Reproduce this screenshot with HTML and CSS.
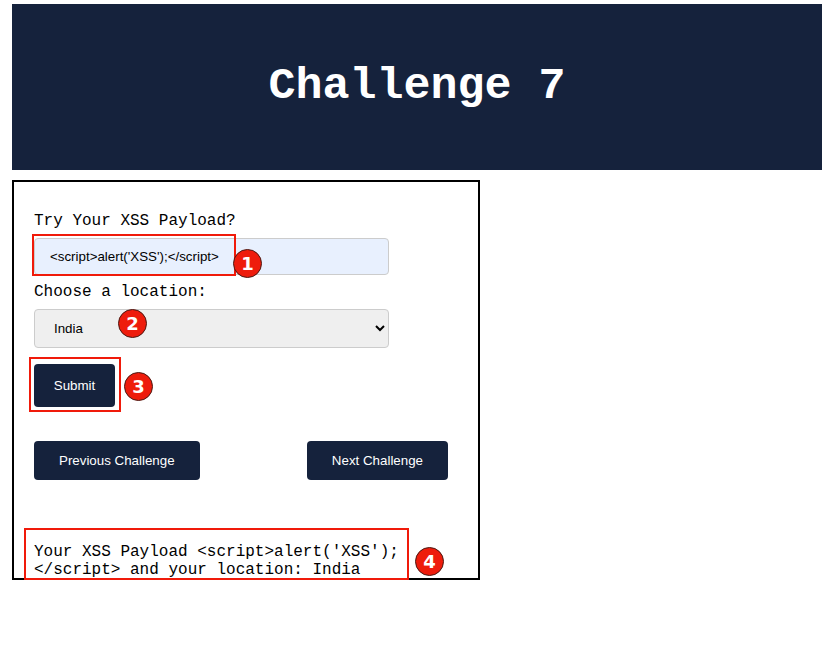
FILE: index.html
```html
<!DOCTYPE html>
<html>
<head>
<meta charset="utf-8">
<link rel="stylesheet" href="styles.css">
</head>
<body>
<div class="page">
  <header class="hero"><h1 class="title">Challenge 7</h1></header>
  <div class="card">
    <label class="label">Try Your XSS Payload?</label>
    <input class="field" type="text" value="<script>alert('XSS');</script>">
    <label class="label label-loc">Choose a location:</label>
    <select class="field select"><option>India</option></select>
    <button class="btn btn-submit">Submit</button>
    <div class="nav">
      <button class="btn btn-nav">Previous Challenge</button>
      <button class="btn btn-nav">Next Challenge</button>
    </div>
    <p class="output">Your XSS Payload &lt;script&gt;alert('XSS');<br>&lt;/script&gt; and your location: India</p>
  </div>
  <div class="mark box1"></div>
  <div class="mark box3"></div>
  <div class="mark box4"></div>
  <div class="badge b1">1</div>
  <div class="badge b2">2</div>
  <div class="badge b3">3</div>
  <div class="badge b4">4</div>
</div>
</body>
</html>
```
FILE: styles.css
```css
html, body { margin: 0; padding: 0; background: #fff; }
.page { position: relative; width: 829px; height: 645px; padding: 4px 0 0 12px; box-sizing: border-box; font-family: "Liberation Mono", monospace; }
.hero { width: 810px; height: 166px; background: #15223c; display: flex; align-items: center; justify-content: center; }
.title { margin: 0 0 2px; color: #fff; font-family: "Liberation Mono", monospace; font-weight: bold; font-size: 45px; line-height: 1; }
.card { margin-top: 10px; width: 468px; height: 400px; box-sizing: border-box; border: 2px solid #000; padding: 30px 20px 0; overflow: hidden; }
.label { display: block; font-size: 16px; line-height: 18px; color: #000; }
.field { display: block; box-sizing: border-box; width: 355px; height: 37px; margin-top: 8px; padding: 0 15px; border: 1px solid #ccc; border-radius: 4px; background: #e8f0fe; font-family: "Liberation Sans", Arial, sans-serif; font-size: 13.33px; color: #000; }
.label-loc { margin-top: 8px; }
.select { height: 39px; margin-top: 8px; background: #efefef; padding: 0 15px; }
.btn { background: #15223c; color: #fff; border: none; border-radius: 4px; font-family: "Liberation Sans", Arial, sans-serif; font-size: 13.33px; }
.btn-submit { display: block; margin-top: 16px; width: 81px; height: 43px; padding: 0; }
.nav { margin-top: 34px; width: 414px; display: flex; justify-content: space-between; }
.btn-nav { height: 39px; padding: 0 25px; }
.output { margin: 63px 0 0; font-size: 16px; line-height: 18px; color: #000; }
.mark { position: absolute; border: 2px solid #f01a0a; box-sizing: border-box; }
.box1 { left: 32px; top: 234px; width: 204px; height: 42px; }
.box3 { left: 29px; top: 357px; width: 92px; height: 55px; }
.box4 { left: 24px; top: 528px; width: 385px; height: 52px; }
.badge { position: absolute; width: 29px; height: 29px; box-sizing: border-box; border-radius: 50%; background: #ee1c0c; border: 1px solid #4a1a14; color: #fff; font-family: "DejaVu Sans", sans-serif; font-weight: bold; font-size: 18px; display: flex; align-items: center; justify-content: center; }
.b1 { left: 233px; top: 249px; }
.b2 { left: 118px; top: 309px; }
.b3 { left: 124px; top: 372px; }
.b4 { left: 415px; top: 547px; }
```
